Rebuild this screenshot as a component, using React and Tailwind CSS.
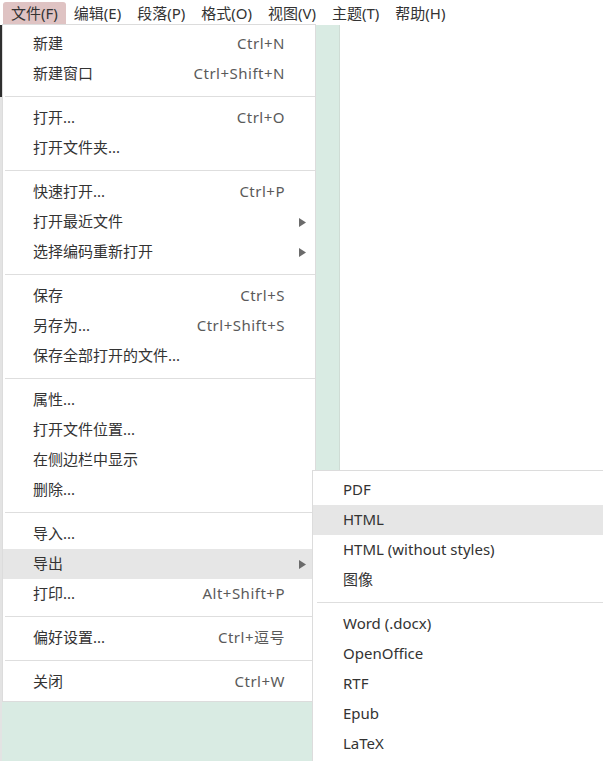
const font = { fontFamily: '"Noto Sans", "Noto Sans CJK SC", sans-serif' };

const topMenus = ['文件(F)', '编辑(E)', '段落(P)', '格式(O)', '视图(V)', '主题(T)', '帮助(H)'];

const fileMenu = [
  [{ label: '新建', key: 'Ctrl+N' }, { label: '新建窗口', key: 'Ctrl+Shift+N' }],
  [{ label: '打开...', key: 'Ctrl+O' }, { label: '打开文件夹...' }],
  [{ label: '快速打开...', key: 'Ctrl+P' }, { label: '打开最近文件', sub: true }, { label: '选择编码重新打开', sub: true }],
  [{ label: '保存', key: 'Ctrl+S' }, { label: '另存为...', key: 'Ctrl+Shift+S' }, { label: '保存全部打开的文件...' }],
  [{ label: '属性...' }, { label: '打开文件位置...' }, { label: '在侧边栏中显示' }, { label: '删除...' }],
  [{ label: '导入...' }, { label: '导出', sub: true, active: true }, { label: '打印...', key: 'Alt+Shift+P' }],
  [{ label: '偏好设置...', key: 'Ctrl+逗号' }],
  [{ label: '关闭', key: 'Ctrl+W' }],
];

const exportMenu = [
  [{ label: 'PDF' }, { label: 'HTML', active: true }, { label: 'HTML (without styles)' }, { label: '图像' }],
  [{ label: 'Word (.docx)' }, { label: 'OpenOffice' }, { label: 'RTF' }, { label: 'Epub' }, { label: 'LaTeX' }],
];

function Arrow() {
  return (
    <svg width="7" height="9" viewBox="0 0 7 9" className="text-[#6b6b6b]">
      <path d="M0 0 L7 4.5 L0 9 Z" fill="currentColor" />
    </svg>
  );
}

function Separator({ inset }) {
  return (
    <div className={`flex h-[14px] items-center ${inset}`}>
      <div className="h-px w-full bg-[#dedede]" />
    </div>
  );
}

function Item({ item, padLeft }) {
  return (
    <div
      className={`relative flex h-[30px] items-center justify-between pb-[2px] pr-[30px] leading-none ${padLeft} ${
        item.active ? 'bg-[#e6e6e6]' : ''
      }`}
    >
      <span className="text-[#333]">{item.label}</span>
      {item.key && <span className="tracking-[0.5px] text-[#5a5a5a]">{item.key}</span>}
      {item.sub && (
        <span className="absolute right-[9px] top-[11px] flex">
          <Arrow />
        </span>
      )}
    </div>
  );
}

function Menu({ groups, className, padLeft, sepInset }) {
  return (
    <div className={`absolute border border-[#dcdcdc] bg-white ${className}`}>
      {groups.map((g, gi) => (
        <div key={gi}>
          {gi > 0 && <Separator inset={sepInset} />}
          {g.map((item) => (
            <Item key={item.label} item={item} padLeft={padLeft} />
          ))}
        </div>
      ))}
    </div>
  );
}

export default function App() {
  return (
    <div className="relative h-[761px] w-[603px] overflow-hidden bg-white text-[15px]" style={font}>
      <div className="flex h-[25px] items-start px-[3px] pt-[2px] text-[#333]">
        {topMenus.map((m, i) => (
          <div
            key={m}
            className={`flex h-[22px] items-center px-[8px] pt-[1px] leading-none ${
              i === 0 ? 'rounded-t-[3px] bg-[#dfc3c3]' : ''
            }`}
          >
            {m}
          </div>
        ))}
      </div>

      <div className="flex h-[736px]">
        <div className="flex w-[2px] flex-col">
          <div className="h-[72px] bg-[#2e2e2e]" />
          <div className="flex-1 bg-[#e3e3e3]" />
        </div>
        <div className="w-[338px] border-r border-[#cfdcd5] bg-[#d9ebe3]" />
        <div className="flex-1 bg-white" />
      </div>

      <Menu
        groups={fileMenu}
        className="left-[2px] top-[24px] w-[314px] pt-[4px] pb-[4px]"
        padLeft="pl-[30px]"
        sepInset="pl-[2px]"
      />
      <Menu
        groups={exportMenu}
        className="left-[312px] top-[470px] w-[320px] pt-[4px] pb-[10px]"
        padLeft="pl-[30px]"
        sepInset="pl-[4px]"
      />
    </div>
  );
}
